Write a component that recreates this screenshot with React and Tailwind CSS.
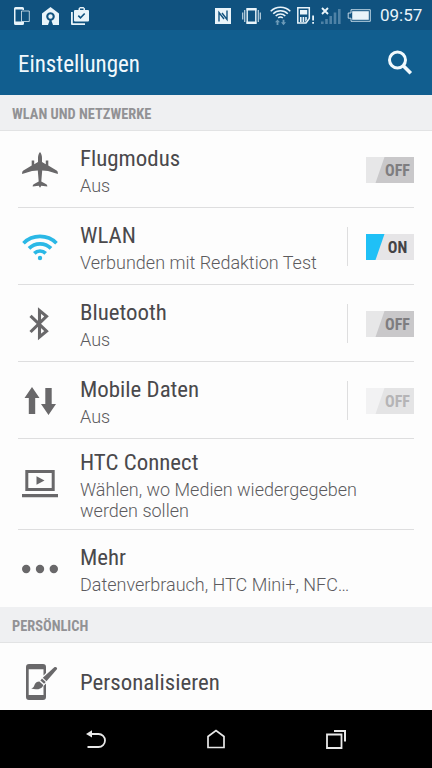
import clsx from 'clsx';

const condensed = "font-['Roboto_Condensed','Roboto','Liberation_Sans_Narrow',sans-serif] [font-stretch:75%]";

function Svg({ w, h, className, children }) {
  return (
    <svg width={w} height={h} viewBox={`0 0 ${w} ${h}`} className={clsx('block shrink-0', className)} fill="currentColor">
      {children}
    </svg>
  );
}

function PlaneIcon() {
  return (
    <Svg w={38} h={36}>
      <path d="M19 0c1.400 1.500 2 3.500 2 6v4l3.800 2.200V8.600h2.500v5L35.600 18.600c1 .7 1.300 1.700 1.300 3.300L27 18.900l-5.800-.4-.9 11 5 2.700c.8.500 1 1.100 1 2.300l-6-.7L19 35.800l-1.300-2-6 .7c0-1.200.2-1.800 1-2.300l5-2.700-.9-11-5.800.4L1.100 21.900c0-1.600.3-2.600 1.300-3.300l8.300-5V8.600h2.500v3.600L17 10V6c0-2.500.6-4.500 2-6z" />
    </Svg>
  );
}

function WifiIcon() {
  return (
    <Svg w={36} h={28} className="text-[#2bb8e6]">
      <g fill="none" stroke="currentColor" strokeWidth="3.700">
        <path d="M1.500 10.200a23.500 23.500 0 0 1 33 0" />
        <path d="M7 15.400a15.500 15.500 0 0 1 22 0" />
        <path d="M12.300 20.300a8.200 8.200 0 0 1 11.400 0" />
      </g>
      <circle cx="18" cy="25" r="2.200" />
    </Svg>
  );
}

function BluetoothIcon() {
  return (
    <Svg w={36} h={36} className="-ml-0.5">
      <path
        d="M9.500 9.800l16 15.400-7 5.800V4.500l7 5.800L9.500 26"
        fill="none"
        stroke="currentColor"
        strokeWidth="3.100"
      />
    </Svg>
  );
}

function DataIcon() {
  return (
    <Svg w={32} h={28}>
      <path d="M8 0l7.500 11h-4.300v16H4.800V11H.500z" />
      <path d="M24.500 28L17 17h4.300V1h6.400v16H32z" />
    </Svg>
  );
}

function ConnectIcon() {
  return (
    <Svg w={36} h={28}>
      <path d="M3.300 0h29.400v21H3.300zM6.300 3v15h23.400V3z" fillRule="evenodd" />
      <path d="M14.500 6.300l8 4.200-8 4.200z" />
      <path d="M0 24h36v3.200H0z" />
    </Svg>
  );
}

function MoreIcon() {
  return (
    <Svg w={36} h={10}>
      <circle cx="4.200" cy="5" r="4.200" />
      <circle cx="18" cy="5" r="4.200" />
      <circle cx="31.800" cy="5" r="4.200" />
    </Svg>
  );
}

function PersonalizeIcon() {
  return (
    <Svg w={32} h={36} className="ml-1">
      <path
        d="M3 0h14a3 3 0 0 1 3 3v6l-2.500 2.500V5.200H2.700V31h14.800V22l2.500-2.500V33a3 3 0 0 1-3 3H3a3 3 0 0 1-3-3V3a3 3 0 0 1 3-3z"
        fillRule="evenodd"
      />
      <path d="M28.300 3.300c1.700-1.300 3.700.7 2.400 2.300L20.500 17.300l-3.700-3.500z" />
      <path d="M16 14.600l3.700 3.500-1.600 1.700-3.700-3.300z" />
      <path d="M13.400 17.500l3.900 3.400c-1 4.200-6.800 5.300-12 3.700 2.500-.7 2.600-2 3.400-4 .8-1.900 2.600-3.200 4.700-3.100z" />
    </Svg>
  );
}

const toggleStyles = {
  on: { bg: 'bg-[#e6e5e7]', text: 'text-[#444346]', fill: 'text-[#1fc0f6]', label: 'ON' },
  off: { bg: 'bg-[#c9c8ca]', text: 'text-[#7e7d80]', fill: 'text-[#e7e7e8]', label: 'OFF' },
  disabled: { bg: 'bg-[#e4e4e5]', text: 'text-[#b5b4b6]', fill: 'text-[#f2f2f3]', label: 'OFF' },
};

function Toggle({ state }) {
  const s = toggleStyles[state];
  return (
    <div className={clsx('relative flex h-[26px] w-[48px] items-center justify-center pl-[15px] pt-[3px]', s.bg)}>
      <Svg w={19} h={26} className={clsx('absolute left-0 top-0', s.fill)}>
        <path d="M0 0h18.500L9.500 26H0z" />
      </Svg>
      <span className={clsx('relative text-[16px] font-bold leading-none', condensed, s.text)}>{s.label}</span>
    </div>
  );
}

function Row({ icon, title, subtitle, toggle, split, height, last }) {
  return (
    <div className={clsx('relative flex items-center', height)}>
      <div className="flex w-20 shrink-0 justify-center text-[#69686a]">{icon}</div>
      <div className="min-w-0 flex-1 pt-0.5">
        <div className={clsx('whitespace-nowrap text-[22.900px] leading-[28px] text-[#4a494c]', condensed)}>{title}</div>
        {subtitle && (
          <div className="whitespace-pre pt-0.5 text-[18px] font-light leading-[21px] text-[#5c5b5e] font-['Roboto',sans-serif]">
            {subtitle}
          </div>
        )}
      </div>
      {toggle && (
        <div className={clsx('mr-[18px] flex h-[39px] items-center pl-[18px]', split && 'border-l border-[#dededf]')}>
          <Toggle state={toggle} />
        </div>
      )}
      {!last && <div className="absolute bottom-0 left-[18px] right-[18px] h-px bg-[#dededf]" />}
    </div>
  );
}

function SectionHeader({ children }) {
  return (
    <div
      className={clsx(
        'flex h-9 items-center border-b border-[#e2e3e4] bg-[#eff0f2] pl-3 pt-1 text-[14.400px] font-bold text-[#929295]',
        condensed
      )}
    >
      {children}
    </div>
  );
}

function StatusBar() {
  return (
    <div className="flex h-[30px] shrink-0 items-center bg-[#10527f] pl-[14px] pr-[9px] pt-px text-[#e9f4fa]">
      <Svg w={16} h={18}>
        <path d="M1.500 0h7a1.500 1.500 0 0 1 1.500 1.500V3H8.500V2.500h-7v12h7V15H10v1.500A1.500 1.500 0 0 1 8.500 18h-7A1.500 1.500 0 0 1 0 16.500v-15A1.500 1.500 0 0 1 1.500 0z" />
        <path d="M7.500 4h7.800v10.500H7.500z" fill="none" stroke="currentColor" strokeOpacity=".75" />
      </Svg>
      <Svg w={17} h={18} className="ml-3">
        <path
          d="M8.500 0L17 6.500V18h-6l-1.500-4.300a4.300 4.300 0 1 0-2 0L6 18H0V6.500zM8.500 7.300a2.200 2.200 0 1 1 0 4.400 2.200 2.200 0 0 1 0-4.400z"
          fillRule="evenodd"
        />
      </Svg>
      <Svg w={18} h={18} className="ml-3">
        <path d="M0 5h1.800v11.200H14V18H1a1 1 0 0 1-1-1z" />
        <path d="M4 3h3.500V1.500L9 0h3.500L14 1.500V3h3a1 1 0 0 1 1 1v9.500a1 1 0 0 1-1 1H4a1 1 0 0 1-1-1V4a1 1 0 0 1 1-1zM9 1.500V3h3.500V1.500z" fillRule="evenodd" />
        <path d="M7.300 8.600l2.200 2.200 4.200-4.300" fill="none" stroke="#10527f" strokeWidth="1.600" />
      </Svg>

      <div className="flex-1" />

      {/* NFC */}
      <Svg w={16} h={16}>
        <path d="M0 0h16v16H0z" />
        <path d="M4 13.500V4.500l5 6.500M12 2.500v9L7 5" fill="none" stroke="#10527f" strokeWidth="1.400" />
      </Svg>
      {/* Vibration */}
      <Svg w={19} h={18} className="ml-[11px]">
        <path d="M5.200 2h8.600v14H5.200z" fill="none" stroke="currentColor" strokeWidth="1.400" />
        <path d="M4.500 1h10v2.500h-10zM4.500 14.500h10V17h-10z" />
        <path d="M2.700 3v12M16.300 3v12M.7 5.500v7M18.300 5.500v7" stroke="currentColor" strokeWidth="1.200" opacity=".8" />
      </Svg>
      {/* WLAN with idle traffic arrows */}
      <Svg w={21} h={20} className="ml-[9px]">
        <g fill="none" stroke="currentColor" strokeWidth="1.500">
          <path d="M.7 5.200a14 14 0 0 1 19.600 0" />
          <path d="M3.200 7.700a10.300 10.300 0 0 1 14.600 0" />
          <path d="M5.700 10a6.800 6.800 0 0 1 9.600 0" />
          <path d="M8.200 12a3.400 3.400 0 0 1 4.600 0" />
        </g>
        <path d="M7.500 13.500l2.500 2.800H8.400V19H6.600v-2.700H5zM13.500 19.200l2.500-2.900h-1.600v-2.500h-1.800v2.500H11z" fill="#6f9cb9" />
      </Svg>
      {/* SIM warning */}
      <Svg w={18} h={17} className="ml-[6px]">
        <path d="M.8.800h11.500v10.700L9 16H.8z" fill="none" stroke="currentColor" strokeWidth="1.500" />
        <path d="M3 3h7.200v4.500H3zM3 10h1.600v5H3zM5.600 10h1.600v5H5.600zM8.200 10h1.600v3L8.200 15z" />
        <path d="M15.200 8.500h1.800v5h-1.800zM15.200 15h1.800v1.800h-1.800z" />
      </Svg>
      {/* No signal */}
      <Svg w={20} h={18} className="ml-[6px]">
        <path d="M1 1l6 6M7 1L1 7" stroke="currentColor" strokeWidth="1.900" />
        <path d="M0 14.500h2.600V17H0zM4.200 12h2.600v5H4.200zM8.400 9H11v8H8.400zM12.700 5.500h2.600V17h-2.600zM17 2h2.600v15H17z" fill="#4f82a6" />
      </Svg>
      {/* Battery */}
      <Svg w={24} h={13} className="ml-[6px]">
        <path d="M4 .7h19.300v11.600H4V9.200H1.200V4H4z" fill="none" stroke="currentColor" strokeWidth="1" opacity=".8" />
        <path d="M5.200 2.200h16.600v8.600H5.200z" />
      </Svg>
      <span className="ml-[9px] w-[43px] whitespace-nowrap text-[17px] leading-none font-['Roboto',sans-serif]">09:57</span>
    </div>
  );
}

function NavBar() {
  return (
    <div className="flex h-[58px] shrink-0 items-center justify-center bg-black text-[#e8e8e8]">
      <div className="flex w-[120px] justify-center">
        <Svg w={20} h={20}>
          <path d="M3 5h9.500a6.500 6.500 0 0 1 0 13H1.500" fill="none" stroke="currentColor" strokeWidth="1.800" />
          <path d="M0 5l6-3.800v7.300z" />
        </Svg>
      </div>
      <div className="flex w-[120px] justify-center">
        <Svg w={18} h={20}>
          <path d="M1 18.500V7.500l8-6 8 6v11z" fill="none" stroke="currentColor" strokeWidth="1.700" />
        </Svg>
      </div>
      <div className="flex w-[120px] justify-center">
        <Svg w={20} h={20}>
          <path d="M1 5.500h14.500V19H1z" fill="none" stroke="currentColor" strokeWidth="1.800" />
          <path d="M8 2h11v10.500" fill="none" stroke="currentColor" strokeWidth="2" />
        </Svg>
      </div>
    </div>
  );
}

export default function App() {
  return (
    <div className="flex h-[768px] w-[432px] flex-col overflow-hidden bg-[#fdfdfd]">
      <StatusBar />
      <header className="flex h-[65px] shrink-0 items-center justify-between bg-[#115e8f] pl-[18px] pr-[19px] text-[#f1f9fd]">
        <h1 className={clsx('pt-[3px] text-[23px] leading-none', condensed)}>Einstellungen</h1>
        <Svg w={26} h={26}>
          <circle cx="10.500" cy="10" r="8" fill="none" stroke="currentColor" strokeWidth="3" />
          <path d="M15.800 15.300l8 8" stroke="currentColor" strokeWidth="3.600" />
        </Svg>
      </header>

      <main className="min-h-0 flex-1 overflow-hidden">
        <SectionHeader>WLAN UND NETZWERKE</SectionHeader>
        <Row height="h-[77px]" icon={<PlaneIcon />} title="Flugmodus" subtitle="Aus" toggle="off" />
        <Row height="h-[77px]" icon={<WifiIcon />} title="WLAN" subtitle="Verbunden mit Redaktion Test" toggle="on" split />
        <Row height="h-[77px]" icon={<BluetoothIcon />} title="Bluetooth" subtitle="Aus" toggle="off" split />
        <Row height="h-[77px]" icon={<DataIcon />} title="Mobile Daten" subtitle="Aus" toggle="disabled" split />
        <Row
          height="h-[91px] pb-0.5"
          icon={<ConnectIcon />}
          title="HTC Connect"
          subtitle={'Wählen, wo Medien wiedergegeben\nwerden sollen'}
        />
        <Row height="h-[77px]" icon={<MoreIcon />} title="Mehr" subtitle="Datenverbrauch, HTC Mini+, NFC…" last />
        <SectionHeader>PERSÖNLICH</SectionHeader>
        <Row height="h-[78px]" icon={<PersonalizeIcon />} title="Personalisieren" last />
      </main>

      <NavBar />
    </div>
  );
}
